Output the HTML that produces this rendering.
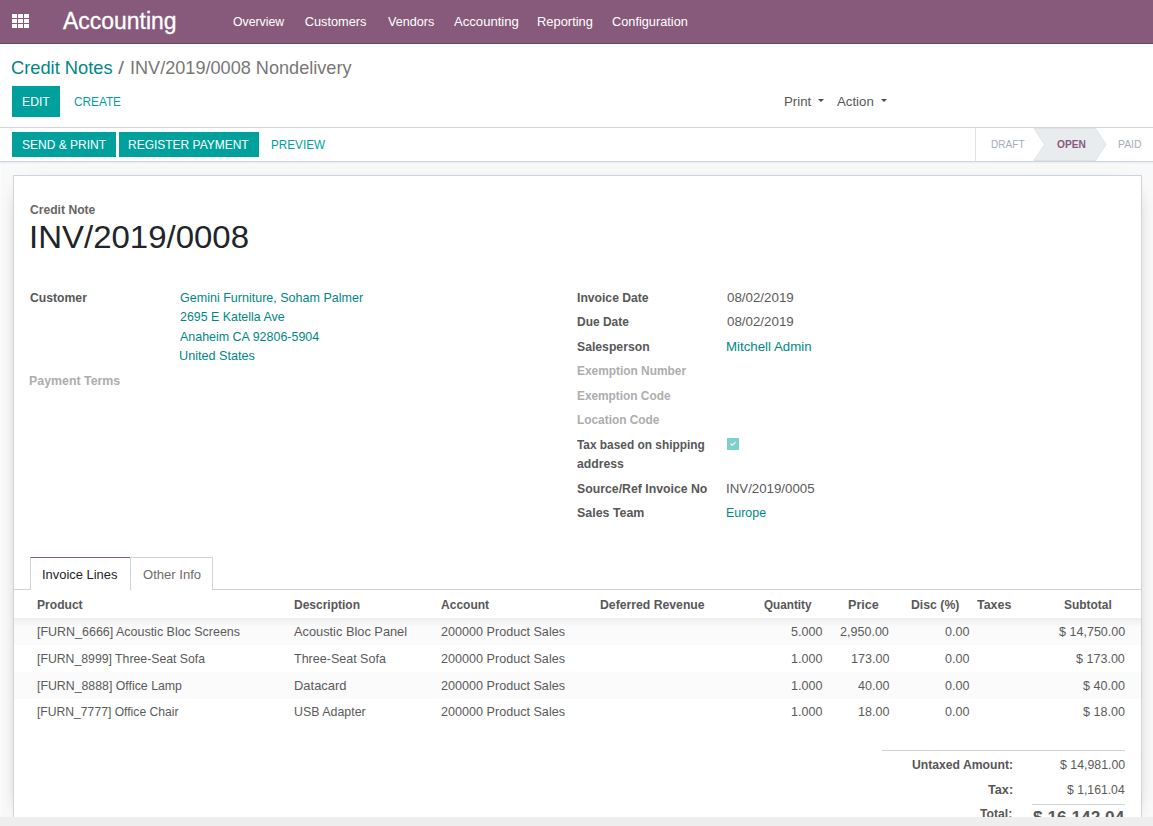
<!DOCTYPE html>
<html><head><meta charset="utf-8"><style>
html,body{margin:0;padding:0;width:1153px;height:826px;overflow:hidden;background:#fff;font-family:"Liberation Sans",sans-serif;}
.t{position:absolute;white-space:nowrap;transform-origin:0 0;}
.r{position:absolute;}
</style></head><body>
<div class="r" style="left:0px;top:0px;width:1153px;height:44px;background:#875A7B;"></div>
<div class="r" style="left:0px;top:43px;width:1153px;height:1px;background:#6d4863;"></div>
<div class="r" style="left:0px;top:162px;width:1153px;height:655px;background:#f9f9f9;"></div>
<div class="r" style="left:0px;top:162px;width:1px;height:655px;background:#fbfcfd;"></div>
<div class="r" style="left:0px;top:817px;width:1153px;height:9px;background:#eeeeee;"></div>
<div class="r" style="left:0px;top:127px;width:1153px;height:1px;background:#d4d4d4;"></div>
<div class="r" style="left:0px;top:161px;width:1153px;height:1px;background:#ced4da;"></div>
<div class="r" style="left:0px;top:162px;width:1153px;height:2px;background:linear-gradient(#e8eef1,#f7f8f8);"></div>
<div class="r" style="left:13px;top:175px;width:1129px;height:642px;background:#fff;border:1px solid #ced4da;border-bottom:none;box-sizing:border-box;box-shadow:0 5px 20px -15px #000;"></div>
<div class="r" style="left:12px;top:14px;width:5px;height:4px;background:#fff;"></div>
<div class="r" style="left:12px;top:19px;width:5px;height:4px;background:#fff;"></div>
<div class="r" style="left:12px;top:24px;width:5px;height:4px;background:#fff;"></div>
<div class="r" style="left:18px;top:14px;width:5px;height:4px;background:#fff;"></div>
<div class="r" style="left:18px;top:19px;width:5px;height:4px;background:#fff;"></div>
<div class="r" style="left:18px;top:24px;width:5px;height:4px;background:#fff;"></div>
<div class="r" style="left:24px;top:14px;width:5px;height:4px;background:#fff;"></div>
<div class="r" style="left:24px;top:19px;width:5px;height:4px;background:#fff;"></div>
<div class="r" style="left:24px;top:24px;width:5px;height:4px;background:#fff;"></div>
<div class="t" style="left:63.25px;top:10.00px;font-size:23.30px;line-height:23.30px;color:#fff;transform:scaleX(0.9846);-webkit-text-stroke:0.3px #fff;">Accounting</div>
<div class="t" style="left:232.92px;top:16.00px;font-size:12.80px;line-height:12.80px;color:#fff;transform:scaleX(0.9588);">Overview</div>
<div class="t" style="left:304.66px;top:16.00px;font-size:12.80px;line-height:12.80px;color:#fff;">Customers</div>
<div class="t" style="left:387.55px;top:16.00px;font-size:12.80px;line-height:12.80px;color:#fff;transform:scaleX(0.9860);">Vendors</div>
<div class="t" style="left:454.17px;top:16.00px;font-size:12.80px;line-height:12.80px;color:#fff;transform:scaleX(1.0242);">Accounting</div>
<div class="t" style="left:537.04px;top:16.00px;font-size:12.80px;line-height:12.80px;color:#fff;transform:scaleX(1.0087);">Reporting</div>
<div class="t" style="left:611.86px;top:16.00px;font-size:12.80px;line-height:12.80px;color:#fff;transform:scaleX(0.9963);">Configuration</div>
<div class="t" style="left:11.09px;top:59.00px;font-size:18.50px;line-height:18.50px;color:#008784;transform:scaleX(0.9878);">Credit Notes</div>
<div class="t" style="left:118.00px;top:59.00px;font-size:18.50px;line-height:18.50px;color:#777;transform:scaleX(1.1666);">/</div>
<div class="t" style="left:129.93px;top:59.00px;font-size:18.50px;line-height:18.50px;color:#777;transform:scaleX(0.9790);">INV/2019/0008 Nondelivery</div>
<div class="r" style="left:12px;top:86px;width:48px;height:31px;background:#00A09D;"></div>
<div class="t" style="left:21.50px;top:96.00px;font-size:12.80px;line-height:12.80px;color:#fff;transform:scaleX(0.9527);">EDIT</div>
<div class="t" style="left:73.71px;top:96.00px;font-size:12.80px;line-height:12.80px;color:#00A09D;transform:scaleX(0.9218);">CREATE</div>
<div class="t" style="left:783.61px;top:96.00px;font-size:12.80px;line-height:12.80px;color:#575757;transform:scaleX(1.0366);">Print</div>
<div class="t" style="left:837.27px;top:96.00px;font-size:12.80px;line-height:12.80px;color:#575757;transform:scaleX(1.0338);">Action</div>
<div class="r" style="left:817.5px;top:99px;width:0;height:0;border-left:3px solid transparent;border-right:3px solid transparent;border-top:3px solid #4c4c4c;"></div>
<div class="r" style="left:881px;top:99px;width:0;height:0;border-left:3px solid transparent;border-right:3px solid transparent;border-top:3px solid #4c4c4c;"></div>
<div class="r" style="left:12px;top:132px;width:104px;height:25px;background:#00A09D;"></div>
<div class="t" style="left:21.86px;top:139.00px;font-size:12.80px;line-height:12.80px;color:#fff;transform:scaleX(0.9375);">SEND &amp; PRINT</div>
<div class="r" style="left:119px;top:132px;width:140px;height:25px;background:#00A09D;"></div>
<div class="t" style="left:128.32px;top:139.00px;font-size:12.80px;line-height:12.80px;color:#fff;transform:scaleX(0.9356);">REGISTER PAYMENT</div>
<div class="t" style="left:271.24px;top:139.00px;font-size:12.80px;line-height:12.80px;color:#00A09D;transform:scaleX(0.9164);">PREVIEW</div>
<div class="r" style="left:975px;top:128px;width:1px;height:33px;background:#dee2e6;"></div>
<svg class="r" style="left:1030px;top:128px" width="80" height="33"><polygon points="4,0.5 65.5,0.5 76,16.5 65.5,32.5 4,32.5 14.5,16.5" fill="#e9ecef" stroke="#dfe3e7" stroke-width="1"/></svg>
<div class="t" style="left:990.57px;top:139.00px;font-size:11.80px;line-height:11.80px;color:#a6adb5;transform:scaleX(0.8559);">DRAFT</div>
<div class="t" style="left:1056.98px;top:139.00px;font-size:11.80px;line-height:11.80px;color:#875A7B;font-weight:bold;transform:scaleX(0.8642);">OPEN</div>
<div class="t" style="left:1117.75px;top:139.00px;font-size:11.80px;line-height:11.80px;color:#a6adb5;transform:scaleX(0.8829);">PAID</div>
<div class="t" style="left:29.90px;top:203.00px;font-size:13.00px;line-height:13.00px;color:#666;font-weight:bold;transform:scaleX(0.9322);">Credit Note</div>
<div class="t" style="left:29.47px;top:222.00px;font-size:30.50px;line-height:30.50px;color:#212529;transform:scaleX(1.0814);">INV/2019/0008</div>
<div class="t" style="left:29.80px;top:291.00px;font-size:13.00px;line-height:13.00px;color:#575757;font-weight:bold;transform:scaleX(0.9374);">Customer</div>
<div class="t" style="left:179.57px;top:291.00px;font-size:13.00px;line-height:13.00px;color:#008784;transform:scaleX(0.9638);">Gemini Furniture, Soham Palmer</div>
<div class="t" style="left:179.78px;top:310.00px;font-size:13.00px;line-height:13.00px;color:#008784;transform:scaleX(0.9538);">2695 E Katella Ave</div>
<div class="t" style="left:180.38px;top:330.00px;font-size:13.00px;line-height:13.00px;color:#008784;transform:scaleX(0.9581);">Anaheim CA 92806-5904</div>
<div class="t" style="left:179.43px;top:349.00px;font-size:13.00px;line-height:13.00px;color:#008784;transform:scaleX(0.9730);">United States</div>
<div class="t" style="left:29.48px;top:374.00px;font-size:13.00px;line-height:13.00px;color:#adadad;font-weight:bold;transform:scaleX(0.9516);">Payment Terms</div>
<div class="t" style="left:576.60px;top:291.00px;font-size:13.00px;line-height:13.00px;color:#575757;font-weight:bold;transform:scaleX(0.9351);">Invoice Date</div>
<div class="t" style="left:576.61px;top:315.00px;font-size:13.00px;line-height:13.00px;color:#575757;font-weight:bold;transform:scaleX(0.9193);">Due Date</div>
<div class="t" style="left:577.06px;top:340.00px;font-size:13.00px;line-height:13.00px;color:#575757;font-weight:bold;transform:scaleX(0.9390);">Salesperson</div>
<div class="t" style="left:576.61px;top:364.00px;font-size:13.00px;line-height:13.00px;color:#adadad;font-weight:bold;transform:scaleX(0.9150);">Exemption Number</div>
<div class="t" style="left:576.62px;top:389.00px;font-size:13.00px;line-height:13.00px;color:#adadad;font-weight:bold;transform:scaleX(0.9114);">Exemption Code</div>
<div class="t" style="left:576.62px;top:413.00px;font-size:13.00px;line-height:13.00px;color:#adadad;font-weight:bold;transform:scaleX(0.9126);">Location Code</div>
<div class="t" style="left:577.27px;top:438.00px;font-size:13.00px;line-height:13.00px;color:#575757;font-weight:bold;transform:scaleX(0.9131);">Tax based on shipping</div>
<div class="t" style="left:577.05px;top:457.00px;font-size:13.00px;line-height:13.00px;color:#575757;font-weight:bold;transform:scaleX(0.9396);">address</div>
<div class="t" style="left:577.06px;top:482.00px;font-size:13.00px;line-height:13.00px;color:#575757;font-weight:bold;transform:scaleX(0.9445);">Source/Ref Invoice No</div>
<div class="t" style="left:577.05px;top:506.00px;font-size:13.00px;line-height:13.00px;color:#575757;font-weight:bold;transform:scaleX(0.9551);">Sales Team</div>
<div class="t" style="left:726.68px;top:291.00px;font-size:13.00px;line-height:13.00px;color:#5a5a5a;transform:scaleX(1.0258);">08/02/2019</div>
<div class="t" style="left:726.68px;top:315.00px;font-size:13.00px;line-height:13.00px;color:#5a5a5a;transform:scaleX(1.0258);">08/02/2019</div>
<div class="t" style="left:726.11px;top:340.00px;font-size:13.00px;line-height:13.00px;color:#008784;transform:scaleX(1.0206);">Mitchell Admin</div>
<div class="r" style="left:727px;top:438px;width:12px;height:12px;background:#7fcfce;"></div>
<svg class="r" style="left:727px;top:438px" width="12" height="12"><path d="M3.5 5.8 L5.3 7.3 L8.5 4.1" stroke="#f4fbfb" stroke-width="1.2" fill="none"/></svg>
<div class="t" style="left:725.98px;top:482.00px;font-size:13.00px;line-height:13.00px;color:#5a5a5a;transform:scaleX(1.0211);">INV/2019/0005</div>
<div class="t" style="left:726.18px;top:506.00px;font-size:13.00px;line-height:13.00px;color:#008784;transform:scaleX(0.9560);">Europe</div>
<div class="r" style="left:13px;top:589px;width:1128px;height:1px;background:#ced4da;"></div>
<div class="r" style="left:30px;top:557px;width:101px;height:33px;background:#fff;border:1px solid #ced4da;border-top:1px solid #875A7B;border-bottom:none;box-sizing:border-box;"></div>
<div class="r" style="left:130px;top:557px;width:83px;height:33px;background:#fff;border:1px solid #ced4da;border-bottom:none;box-sizing:border-box;"></div>
<div class="r" style="left:31px;top:589px;width:99px;height:1px;background:#fff;"></div>
<div class="t" style="left:42.21px;top:568.00px;font-size:13.00px;line-height:13.00px;color:#212529;transform:scaleX(0.9930);">Invoice Lines</div>
<div class="t" style="left:142.69px;top:568.00px;font-size:13.00px;line-height:13.00px;color:#6c6c6c;transform:scaleX(1.0041);">Other Info</div>
<div class="r" style="left:14px;top:618px;width:1127px;height:27px;background:#fbfbfb;"></div>
<div class="r" style="left:14px;top:672px;width:1127px;height:27px;background:#fbfbfb;"></div>
<div class="r" style="left:14px;top:618px;width:1127px;height:9px;background:linear-gradient(rgba(0,0,0,0.055),rgba(0,0,0,0));"></div>
<div class="t" style="left:36.70px;top:598.00px;font-size:13.00px;line-height:13.00px;color:#575757;font-weight:bold;transform:scaleX(0.9293);">Product</div>
<div class="t" style="left:293.71px;top:598.00px;font-size:13.00px;line-height:13.00px;color:#575757;font-weight:bold;transform:scaleX(0.9234);">Description</div>
<div class="t" style="left:441.11px;top:598.00px;font-size:13.00px;line-height:13.00px;color:#575757;font-weight:bold;transform:scaleX(0.9256);">Account</div>
<div class="t" style="left:600.49px;top:598.00px;font-size:13.00px;line-height:13.00px;color:#575757;font-weight:bold;transform:scaleX(0.9403);">Deferred Revenue</div>
<div class="t" style="left:763.72px;top:598.00px;font-size:13.00px;line-height:13.00px;color:#575757;font-weight:bold;transform:scaleX(0.8997);">Quantity</div>
<div class="t" style="left:848.37px;top:598.00px;font-size:13.00px;line-height:13.00px;color:#575757;font-weight:bold;transform:scaleX(0.9673);">Price</div>
<div class="t" style="left:910.59px;top:598.00px;font-size:13.00px;line-height:13.00px;color:#575757;font-weight:bold;transform:scaleX(0.9440);">Disc (%)</div>
<div class="t" style="left:977.46px;top:598.00px;font-size:13.00px;line-height:13.00px;color:#575757;font-weight:bold;transform:scaleX(0.9566);">Taxes</div>
<div class="t" style="left:1063.97px;top:598.00px;font-size:13.00px;line-height:13.00px;color:#575757;font-weight:bold;transform:scaleX(0.9187);">Subtotal</div>
<div class="t" style="left:36.61px;top:625.00px;font-size:13.00px;line-height:13.00px;color:#5a5a5a;transform:scaleX(0.9590);">[FURN_6666] Acoustic Bloc Screens</div>
<div class="t" style="left:294.47px;top:625.00px;font-size:13.00px;line-height:13.00px;color:#5a5a5a;transform:scaleX(0.9841);">Acoustic Bloc Panel</div>
<div class="t" style="left:440.77px;top:625.00px;font-size:13.00px;line-height:13.00px;color:#5a5a5a;transform:scaleX(0.9692);">200000 Product Sales</div>
<div class="t" style="left:790.89px;top:625.00px;font-size:13.00px;line-height:13.00px;color:#5a5a5a;transform:scaleX(0.9650);">5.000</div>
<div class="t" style="left:840.25px;top:625.00px;font-size:13.00px;line-height:13.00px;color:#5a5a5a;transform:scaleX(0.9650);">2,950.00</div>
<div class="t" style="left:944.76px;top:625.00px;font-size:13.00px;line-height:13.00px;color:#5a5a5a;transform:scaleX(0.9650);">0.00</div>
<div class="t" style="left:1059.00px;top:625.00px;font-size:13.00px;line-height:13.00px;color:#5a5a5a;transform:scaleX(0.9650);">$ 14,750.00</div>
<div class="t" style="left:36.63px;top:652.00px;font-size:13.00px;line-height:13.00px;color:#5a5a5a;transform:scaleX(0.9429);">[FURN_8999] Three-Seat Sofa</div>
<div class="t" style="left:294.22px;top:652.00px;font-size:13.00px;line-height:13.00px;color:#5a5a5a;transform:scaleX(0.9631);">Three-Seat Sofa</div>
<div class="t" style="left:440.77px;top:652.00px;font-size:13.00px;line-height:13.00px;color:#5a5a5a;transform:scaleX(0.9692);">200000 Product Sales</div>
<div class="t" style="left:790.89px;top:652.00px;font-size:13.00px;line-height:13.00px;color:#5a5a5a;transform:scaleX(0.9650);">1.000</div>
<div class="t" style="left:850.71px;top:652.00px;font-size:13.00px;line-height:13.00px;color:#5a5a5a;transform:scaleX(0.9650);">173.00</div>
<div class="t" style="left:944.76px;top:652.00px;font-size:13.00px;line-height:13.00px;color:#5a5a5a;transform:scaleX(0.9650);">0.00</div>
<div class="t" style="left:1076.45px;top:652.00px;font-size:13.00px;line-height:13.00px;color:#5a5a5a;transform:scaleX(0.9650);">$ 173.00</div>
<div class="t" style="left:36.63px;top:679.00px;font-size:13.00px;line-height:13.00px;color:#5a5a5a;transform:scaleX(0.9479);">[FURN_8888] Office Lamp</div>
<div class="t" style="left:294.24px;top:679.00px;font-size:13.00px;line-height:13.00px;color:#5a5a5a;transform:scaleX(0.9952);">Datacard</div>
<div class="t" style="left:440.77px;top:679.00px;font-size:13.00px;line-height:13.00px;color:#5a5a5a;transform:scaleX(0.9692);">200000 Product Sales</div>
<div class="t" style="left:790.89px;top:679.00px;font-size:13.00px;line-height:13.00px;color:#5a5a5a;transform:scaleX(0.9650);">1.000</div>
<div class="t" style="left:857.69px;top:679.00px;font-size:13.00px;line-height:13.00px;color:#5a5a5a;transform:scaleX(0.9650);">40.00</div>
<div class="t" style="left:944.76px;top:679.00px;font-size:13.00px;line-height:13.00px;color:#5a5a5a;transform:scaleX(0.9650);">0.00</div>
<div class="t" style="left:1083.43px;top:679.00px;font-size:13.00px;line-height:13.00px;color:#5a5a5a;transform:scaleX(0.9650);">$ 40.00</div>
<div class="t" style="left:36.64px;top:705.00px;font-size:13.00px;line-height:13.00px;color:#5a5a5a;transform:scaleX(0.9344);">[FURN_7777] Office Chair</div>
<div class="t" style="left:293.55px;top:705.00px;font-size:13.00px;line-height:13.00px;color:#5a5a5a;transform:scaleX(0.9534);">USB Adapter</div>
<div class="t" style="left:440.77px;top:705.00px;font-size:13.00px;line-height:13.00px;color:#5a5a5a;transform:scaleX(0.9692);">200000 Product Sales</div>
<div class="t" style="left:790.89px;top:705.00px;font-size:13.00px;line-height:13.00px;color:#5a5a5a;transform:scaleX(0.9650);">1.000</div>
<div class="t" style="left:857.69px;top:705.00px;font-size:13.00px;line-height:13.00px;color:#5a5a5a;transform:scaleX(0.9650);">18.00</div>
<div class="t" style="left:944.76px;top:705.00px;font-size:13.00px;line-height:13.00px;color:#5a5a5a;transform:scaleX(0.9650);">0.00</div>
<div class="t" style="left:1083.43px;top:705.00px;font-size:13.00px;line-height:13.00px;color:#5a5a5a;transform:scaleX(0.9650);">$ 18.00</div>
<div class="r" style="left:882px;top:750px;width:243px;height:1px;background:#ced4da;"></div>
<div class="t" style="left:911.77px;top:758.00px;font-size:13.00px;line-height:13.00px;color:#575757;font-weight:bold;transform:scaleX(0.9365);">Untaxed Amount:</div>
<div class="t" style="left:1060.08px;top:758.00px;font-size:13.00px;line-height:13.00px;color:#5a5a5a;transform:scaleX(0.9492);">$ 14,981.00</div>
<div class="t" style="left:987.66px;top:783.00px;font-size:13.00px;line-height:13.00px;color:#575757;font-weight:bold;transform:scaleX(0.9764);">Tax:</div>
<div class="t" style="left:1067.48px;top:783.00px;font-size:13.00px;line-height:13.00px;color:#5a5a5a;transform:scaleX(0.9388);">$ 1,161.04</div>
<div class="r" style="left:1032px;top:804px;width:93px;height:1px;background:#ced4da;"></div>
<div class="t" style="left:980.17px;top:807.00px;font-size:13.00px;line-height:13.00px;color:#575757;font-weight:bold;transform:scaleX(0.9388);">Total:</div>
<div class="t" style="left:1033.28px;top:809.00px;font-size:17.20px;line-height:17.20px;color:#575757;font-weight:bold;transform:scaleX(1.0049);">$ 16,142.04</div>
<div class="r" style="left:0px;top:817px;width:1153px;height:9px;background:#eeeeee;"></div>
</body></html>
